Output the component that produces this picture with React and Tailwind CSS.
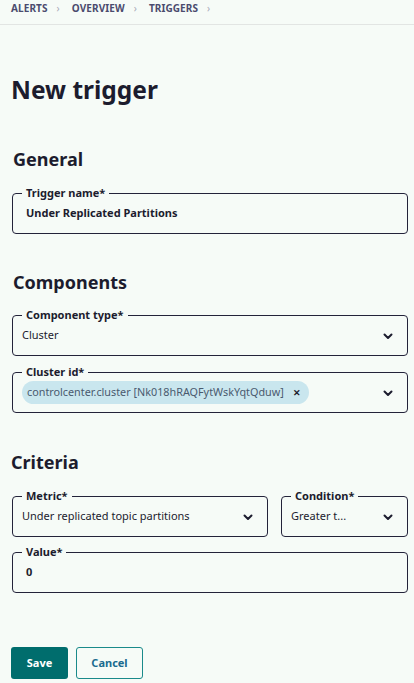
import React from 'react';

const font = { fontFamily: '"Noto Sans", "Open Sans", sans-serif' };

function Chevron() {
  return (
    <svg width="12" height="12" viewBox="0 0 12 12" className="shrink-0">
      <path d="M2.5 4.5 L6 8 L9.5 4.5" fill="none" stroke="#1c1c2e" strokeWidth="2" strokeLinecap="round" strokeLinejoin="round" />
    </svg>
  );
}

function Field({ label, children, className = '', inner = '' }) {
  return (
    <fieldset className={`border border-[#23233a] rounded-[4px] pl-[9px] pr-[13px] pb-[5px] ${className}`}>
      <legend className="px-[4px] text-[11px] font-bold leading-[12px] text-[#1c1c2e]">{label}</legend>
      <div className={`h-[29px] flex items-center justify-between ${inner}`}>{children}</div>
    </fieldset>
  );
}

function Crumb({ children }) {
  return (
    <span className="flex items-center gap-[9px]">
      <span>{children}</span>
      <span className="text-[#a8aab8] font-normal">›</span>
    </span>
  );
}

export default function App() {
  return (
    <div className="min-h-[683px] bg-[#f6fbf7] text-[#1c1c2e]" style={font}>
      <div className="h-[25px] border-b border-[#e2e5e3] flex items-start pt-[2px] gap-[12px] px-[11px] text-[10px] leading-[12px] font-bold tracking-[0.1px] text-[#4b4b6e]">
        <Crumb>ALERTS</Crumb>
        <Crumb>OVERVIEW</Crumb>
        <Crumb>TRIGGERS</Crumb>
      </div>

      <div className="pl-[12px] pr-[6px]">
        <h1 className="text-[24.5px] font-bold leading-[32px] mt-[49px] -ml-[1px]">New trigger</h1>

        <h2 className="text-[18px] font-bold leading-[22px] mt-[42px] ml-[1px]">General</h2>
        <Field label="Trigger name*" className="mt-[17px]" inner="pl-[4px]">
          <span className="text-[11px] font-bold">Under Replicated Partitions</span>
        </Field>

        <h2 className="text-[18px] font-bold leading-[22px] mt-[37px] ml-[1px]">Components</h2>
        <Field label="Component type*" className="mt-[16px]">
          <span className="text-[11px]">Cluster</span>
          <Chevron />
        </Field>
        <Field label="Cluster id*" className="mt-[10px]">
          <span className="h-[23px] rounded-full bg-[#c9e6ee] flex items-center gap-[9px] pl-[5px] pr-[8px] text-[10.8px] text-[#4a5a6e]">
            controlcenter.cluster [Nk018hRAQFytWskYqtQduw]
            <span className="font-bold text-[#1c1c2e] text-[9px]">✕</span>
          </span>
          <Chevron />
        </Field>

        <h2 className="text-[18px] font-bold leading-[22px] mt-[38px] -ml-[1px]">Criteria</h2>
        <div className="flex gap-[13px] mt-[17px]">
          <Field label="Metric*" className="w-[256px]">
            <span className="text-[11px]">Under replicated topic partitions</span>
            <Chevron />
          </Field>
          <Field label="Condition*" className="flex-1">
            <span className="text-[11px]">Greater t...</span>
            <Chevron />
          </Field>
        </div>
        <Field label="Value*" className="mt-[9px]" inner="pl-[4px]">
          <span className="text-[11px] font-bold">0</span>
        </Field>

        <div className="flex gap-[8px] mt-[54px] -ml-[1px]">
          <button className="w-[57px] h-[32px] rounded-[3px] bg-[#006d6d] text-white text-[11px] font-bold">Save</button>
          <button className="w-[67px] h-[32px] rounded-[3px] border border-[#1a8a8a] text-[#1a6b8f] text-[11px] font-bold">Cancel</button>
        </div>
      </div>
    </div>
  );
}
